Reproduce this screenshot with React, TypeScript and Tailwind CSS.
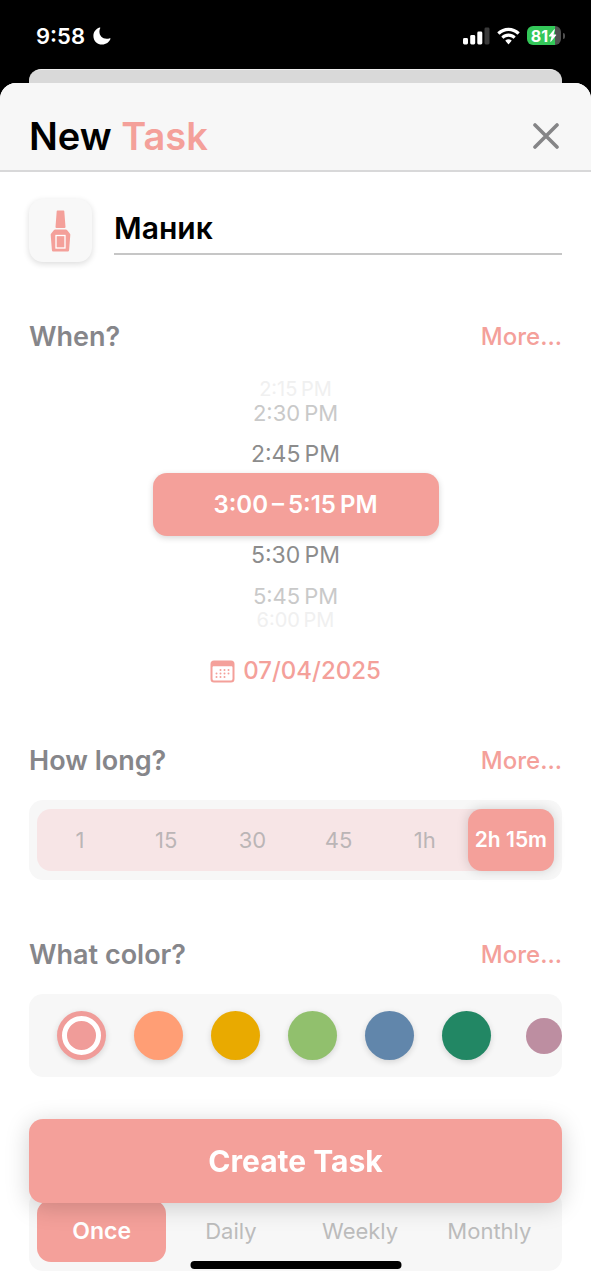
import { useState } from "react";

const durations = ["1", "15", "30", "45", "1h", "2h 15m"];
const repeats = ["Once", "Daily", "Weekly", "Monthly"];
const colors = [
  { name: "Coral", fill: "bg-[#f09c99]" },
  { name: "Orange", fill: "bg-[#ff9e75]" },
  { name: "Amber", fill: "bg-[#e9aa00]" },
  { name: "Green", fill: "bg-[#91c06d]" },
  { name: "Blue", fill: "bg-[#6186ab]" },
  { name: "Emerald", fill: "bg-[#228764]" },
  { name: "Mauve", fill: "bg-[#bd8ea1]" },
];

function StatusBar() {
  return (
    <div className="flex h-[69px] items-center justify-between pt-0.5 pr-[26px] pl-9 text-white">
      <div className="flex items-center gap-2">
        <span className="text-[22px] leading-7 font-semibold">9:58</span>
        <svg className="size-[18px]" viewBox="0 0 18 18" fill="currentColor" aria-hidden="true">
          <path d="M6.6 0.5C2.9 1.8 0.4 5 0.4 8.9c0 4.9 3.9 8.7 8.7 8.7 3.9 0 7.2-2.400 8.400-5.800 0.200-0.500-0.200-0.800-0.700-0.600-1 0.400-2.100 0.600-3.200 0.600-4.300 0-7.200-3-7.200-7.200 0-1.200 0.300-2.300 0.800-3.300 0.300-0.500 0-0.900-0.600-0.800z" />
        </svg>
      </div>
      <div className="flex items-center gap-[7px]">
        <svg className="h-[18px] w-[27px]" viewBox="0 0 27 18" fill="currentColor" aria-hidden="true">
          <rect x="0" y="11" width="5" height="6.500" rx="1.400" />
          <rect x="7.200" y="8" width="5" height="9.500" rx="1.400" />
          <rect x="14.300" y="4.500" width="5" height="13" rx="1.400" />
          <rect x="21.500" y="0.500" width="5" height="17" rx="1.400" fill="#3a3a3a" />
        </svg>
        <svg className="h-[18px] w-[23px]" viewBox="0 0 23 18" fill="currentColor" aria-hidden="true">
          <path d="M11.500 0.800C7.200 0.800 3.400 2.400 0.600 5.100a0.500 0.500 0 0 0 0 0.700L2.200 7.400a0.500 0.500 0 0 0 0.700 0C5.200 5.300 8.200 4 11.500 4s6.300 1.300 8.600 3.400a0.500 0.500 0 0 0 0.700 0l1.600-1.600a0.500 0.500 0 0 0 0-0.700C19.600 2.400 15.800 0.800 11.500 0.800z" />
          <path d="M11.500 6.500c-2.700 0-5.100 1-6.900 2.700a0.500 0.500 0 0 0 0 0.700l1.600 1.600a0.500 0.500 0 0 0 0.700 0c1.200-1.100 2.800-1.800 4.600-1.800s3.400 0.700 4.600 1.800a0.500 0.500 0 0 0 0.700 0l1.600-1.600a0.500 0.500 0 0 0 0-0.700C16.600 7.500 14.200 6.500 11.500 6.500z" />
          <path d="M11.500 12.200c-1.100 0-2.100 0.400-2.900 1.100a0.500 0.500 0 0 0 0 0.700l2.500 2.900a0.500 0.500 0 0 0 0.800 0l2.500-2.900a0.500 0.500 0 0 0 0-0.700c-0.800-0.700-1.800-1.100-2.900-1.100z" />
        </svg>
        <div className="flex items-center gap-0.5">
          <div className="flex h-[19px] w-[34px] items-center justify-center rounded-md bg-linear-to-r from-[#34c759] from-82% to-[#505050] to-82%">
            <span className="text-base leading-none font-bold">81</span>
            <svg className="h-[13px] w-[9px]" viewBox="0 0 8 13" fill="currentColor" aria-hidden="true">
              <path d="M5.700 0.300 0.400 6.800c-0.200 0.300-0.100 0.600 0.300 0.600h2.400L1.800 12.300c-0.100 0.500 0.300 0.700 0.600 0.400L7.700 6.200c0.200-0.300 0.100-0.600-0.300-0.600H5L6.300 0.700c0.100-0.500-0.300-0.700-0.600-0.400z" />
            </svg>
          </div>
          <span className="h-1.5 w-0.5 rounded-r-full bg-[#505050]" />
        </div>
      </div>
    </div>
  );
}

function SectionHeader({ title }: { title: string }) {
  return (
    <div className="flex h-[34px] items-center justify-between">
      <h2 className="text-[27px] leading-8 font-semibold text-[#86868a]">{title}</h2>
      <button type="button" className="text-2xl leading-8 font-medium text-[#f4a09a]">
        More...
      </button>
    </div>
  );
}

export default function App() {
  const [title, setTitle] = useState("Маник");
  const [duration, setDuration] = useState("2h 15m");
  const [color, setColor] = useState("Coral");
  const [repeat, setRepeat] = useState("Once");

  return (
    <div className="min-h-screen bg-black font-['Inter','Liberation_Sans',sans-serif] text-black">
      <StatusBar />
      <div className="mx-[29px] h-3.5 rounded-t-xl border-t border-[#eeeeee] bg-[#d9d9d9]" />

      <div className="rounded-t-2xl bg-white">
        <header className="flex items-center justify-between rounded-t-2xl border-b-2 border-[#d8d8d9] bg-[#f7f7f7] px-[29px] pt-[25px] pb-1.5">
          <h1 className="text-[38px] leading-[56px] font-semibold">
            New <span className="text-[#f4a09a]">Task</span>
          </h1>
          <button type="button" aria-label="Close" className="-mr-1 flex size-10 items-center justify-center text-[#858587]">
            <svg className="size-[26px]" viewBox="0 0 26 26" fill="none" stroke="currentColor" strokeWidth="3.600" strokeLinecap="round" aria-hidden="true">
              <path d="M2 2 24 24M24 2 2 24" />
            </svg>
          </button>
        </header>

        <main className="px-[29px] pt-[27px] pb-[9px]">
          <div className="flex items-center gap-[22px]">
            <button type="button" aria-label="Choose icon" className="flex size-[63px] shrink-0 items-center justify-center rounded-[14px] bg-[#f8f8f8] text-[#f4a09a] shadow-[0_2px_6px_rgba(0,0,0,0.14)]">
              <svg className="h-[42px] w-[21px]" viewBox="0 0 21 42" aria-hidden="true">
                <path fill="currentColor" d="M7.500 0.500h6c0.500 0 0.700 0.300 0.800 0.700L15.500 17c0 0.700-0.300 1-0.900 1H6.400c-0.600 0-0.900-0.300-0.900-1L6.700 1.200c0-0.400 0.300-0.700 0.800-0.700z" />
                <path fill="currentColor" d="M5.200 19.500h10.600c0.700 0 1 0.200 1.400 0.700l2.600 3.200c0.500 0.600 0.600 1 0.500 1.700l-1.200 14.900c-0.100 1-0.700 1.500-1.600 1.500H3.500c-0.900 0-1.500-0.500-1.600-1.500L0.700 25.100c-0.100-0.700 0-1.100 0.500-1.700l2.600-3.200c0.400-0.500 0.700-0.700 1.400-0.700z" />
                <rect x="6" y="25.500" width="9" height="12.500" fill="none" stroke="#fff" strokeWidth="1.300" />
              </svg>
            </button>
            <input
              aria-label="Task name"
              value={title}
              onChange={(e) => setTitle(e.target.value)}
              className="h-12 min-w-0 flex-1 border-b-2 border-[#c6c6c6] bg-transparent pb-1 text-[30px] font-semibold outline-none"
            />
          </div>

          <section className="mt-[58px]">
            <SectionHeader title="When?" />
            <div className="flex flex-col items-center pt-[25px] text-[23px]">
              <button type="button" className="h-5 text-xl leading-5 text-[#f0f0f0]">2:15&#8201;PM</button>
              <button type="button" className="h-7 text-[22px] leading-7 text-[#c9c9c9]">2:30&#8201;PM</button>
              <button type="button" className="mt-2 leading-[38px] text-[#8c8c8c]">2:45&#8201;PM</button>
              <button type="button" className="h-[63px] w-[286px] rounded-[14px] bg-[#f4a09a] text-2xl font-semibold text-white shadow-[0_2px_6px_rgba(0,0,0,0.16)]">
                3:00&#8201;–&#8201;5:15&#8201;PM
              </button>
              <button type="button" className="mb-2 leading-[38px] text-[#8c8c8c]">5:30&#8201;PM</button>
              <button type="button" className="h-7 text-[22px] leading-7 text-[#c9c9c9]">5:45&#8201;PM</button>
              <button type="button" className="h-5 text-xl leading-5 text-[#f0f0f0]">6:00&#8201;PM</button>
            </div>
            <button type="button" className="mx-auto mt-[25px] flex items-center gap-2 text-2xl leading-8 font-medium text-[#f4a09a]">
              <svg className="h-[23px] w-[25px]" viewBox="0 0 25 23" aria-hidden="true">
                <path fill="currentColor" fillRule="evenodd" d="M4 0.500h17A3.500 3.500 0 0 1 24.500 4v15a3.500 3.500 0 0 1-3.500 3.500H4A3.500 3.500 0 0 1 0.500 19V4A3.500 3.500 0 0 1 4 0.500zM2.500 7.500v11.300c0 1.100 0.700 1.800 1.800 1.800h16.400c1.100 0 1.800-0.700 1.800-1.800V7.500c0-0.800-0.500-1.200-1.300-1.200H3.800c-0.800 0-1.300 0.400-1.300 1.200z" />
                <g fill="currentColor">
                  <circle cx="10.500" cy="10" r="1" />
                  <circle cx="14.500" cy="10" r="1" />
                  <circle cx="18.500" cy="10" r="1" />
                  <circle cx="6.500" cy="13.500" r="1" />
                  <circle cx="10.500" cy="13.500" r="1" />
                  <circle cx="14.500" cy="13.500" r="1" />
                  <circle cx="18.500" cy="13.500" r="1" />
                  <circle cx="6.500" cy="17" r="1" />
                  <circle cx="10.500" cy="17" r="1" />
                  <circle cx="14.500" cy="17" r="1" />
                </g>
              </svg>
              07/04/2025
            </button>
          </section>

          <section className="mt-[57px]">
            <SectionHeader title="How long?" />
            <div className="mt-[22px] rounded-[14px] bg-[#f7f7f7] px-2 py-[9px]">
              <div className="grid h-[62px] grid-cols-6 rounded-[14px] bg-[#f7e5e6]">
                {durations.map((d) => (
                  <button
                    key={d}
                    type="button"
                    aria-pressed={duration === d}
                    onClick={() => setDuration(d)}
                    className={
                      duration === d
                        ? "rounded-[14px] bg-[#f4a09a] text-[21px] font-semibold whitespace-nowrap text-white shadow-[0_0_12px_rgba(0,0,0,0.16)]"
                        : "text-[22px] text-[#bbb5b6]"
                    }
                  >
                    {d}
                  </button>
                ))}
              </div>
            </div>
          </section>

          <section className="mt-[58px]">
            <SectionHeader title="What color?" />
            <div className="mt-[22px] flex h-[83px] items-center overflow-hidden rounded-[14px] bg-[#f7f7f7] pl-3.5">
              {colors.map((c) => (
                <button
                  key={c.name}
                  type="button"
                  aria-label={c.name}
                  aria-pressed={color === c.name}
                  onClick={() => setColor(c.name)}
                  className="flex w-[77px] shrink-0 justify-center"
                >
                  <span
                    className={`flex items-center justify-center rounded-full ${c.name === "Mauve" ? "size-9" : "size-[49px] shadow-[0_2px_6px_rgba(0,0,0,0.14)]"} ${c.fill}`}
                  >
                    {color === c.name && <span className="size-[39px] rounded-full border-5 border-white" />}
                  </span>
                </button>
              ))}
            </div>
          </section>

          <section className="mt-[114px] rounded-[14px] bg-[#f7f7f7] px-2 py-[9px]">
            <div className="grid h-[62px] grid-cols-4">
              {repeats.map((r) => (
                <button
                  key={r}
                  type="button"
                  aria-pressed={repeat === r}
                  onClick={() => setRepeat(r)}
                  className={
                    repeat === r
                      ? "rounded-[14px] bg-[#f4a09a] text-[23px] font-semibold text-white"
                      : "text-[22px] text-[#bcbcbc]"
                  }
                >
                  {r}
                </button>
              ))}
            </div>
          </section>
        </main>
      </div>

      <button
        type="button"
        className="fixed inset-x-[29px] bottom-[77px] h-[84px] rounded-[14px] bg-[#f4a09a] text-[30px] font-bold text-white shadow-[0_4px_24px_rgba(0,0,0,0.18)]"
      >
        Create Task
      </button>
      <div className="fixed bottom-[11px] left-1/2 h-2 w-[211px] -translate-x-1/2 rounded-full bg-black" />
    </div>
  );
}
